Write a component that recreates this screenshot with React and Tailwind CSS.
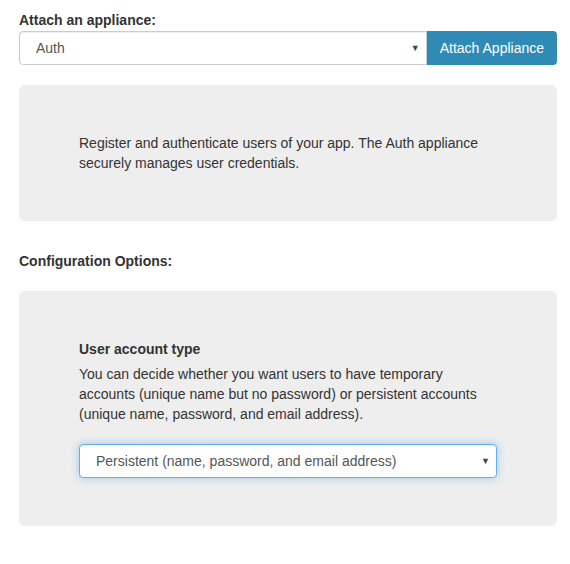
import React from "react";

function Select({ value, options, focused, className = "" }) {
  return (
    <div className={"relative " + className}>
      <select
        defaultValue={value}
        className={
          "block h-[34px] w-full appearance-none bg-white pl-4 pr-8 text-[14px] text-[#555] outline-none " +
          (focused
            ? "rounded border border-[#66afe9] shadow-[inset_0_1px_1px_rgba(0,0,0,0.075),0_0_8px_rgba(102,175,233,0.6)]"
            : "rounded-l border border-[#ccc] shadow-[inset_0_1px_1px_rgba(0,0,0,0.075)]")
        }
      >
        {options.map((o) => (
          <option key={o}>{o}</option>
        ))}
      </select>
      <span className="pointer-events-none absolute right-[7px] top-1/2 -translate-y-1/2 text-[9px] text-[#444]">
        ▼
      </span>
    </div>
  );
}

export default function App() {
  return (
    <div
      className="min-h-screen bg-white pl-[19px] pr-[13px] pt-[10px] text-[14px] leading-5 text-[#333]"
      style={{ fontFamily: '"Liberation Sans", Arial, sans-serif' }}
    >
      {/* Attach appliance */}
      <label className="mb-px block font-bold">Attach an appliance:</label>
      <div className="flex">
        <Select className="flex-1" value="Auth" options={["Auth", "Storage", "Database"]} />
        <button className="h-[34px] rounded-r bg-[#2f8bb5] px-[13px] text-white">
          Attach Appliance
        </button>
      </div>

      {/* Description */}
      <div className="mt-5 rounded-md bg-[#eee] px-[60px] py-12">
        <p>
          Register and authenticate users of your app. The Auth appliance securely manages
          user credentials.
        </p>
      </div>

      {/* Config */}
      <label className="mt-[30px] block font-bold">Configuration Options:</label>
      <div className="mt-5 rounded-md bg-[#eee] px-[60px] py-12">
        <label className="mb-[5px] block font-bold">User account type</label>
        <p>
          You can decide whether you want users to have temporary accounts (unique name but
          no password) or persistent accounts (unique name, password, and email address).
        </p>
        <Select
          className="mt-5"
          focused
          value="Persistent (name, password, and email address)"
          options={[
            "Temporary (unique name, no password)",
            "Persistent (name, password, and email address)",
          ]}
        />
      </div>
    </div>
  );
}
